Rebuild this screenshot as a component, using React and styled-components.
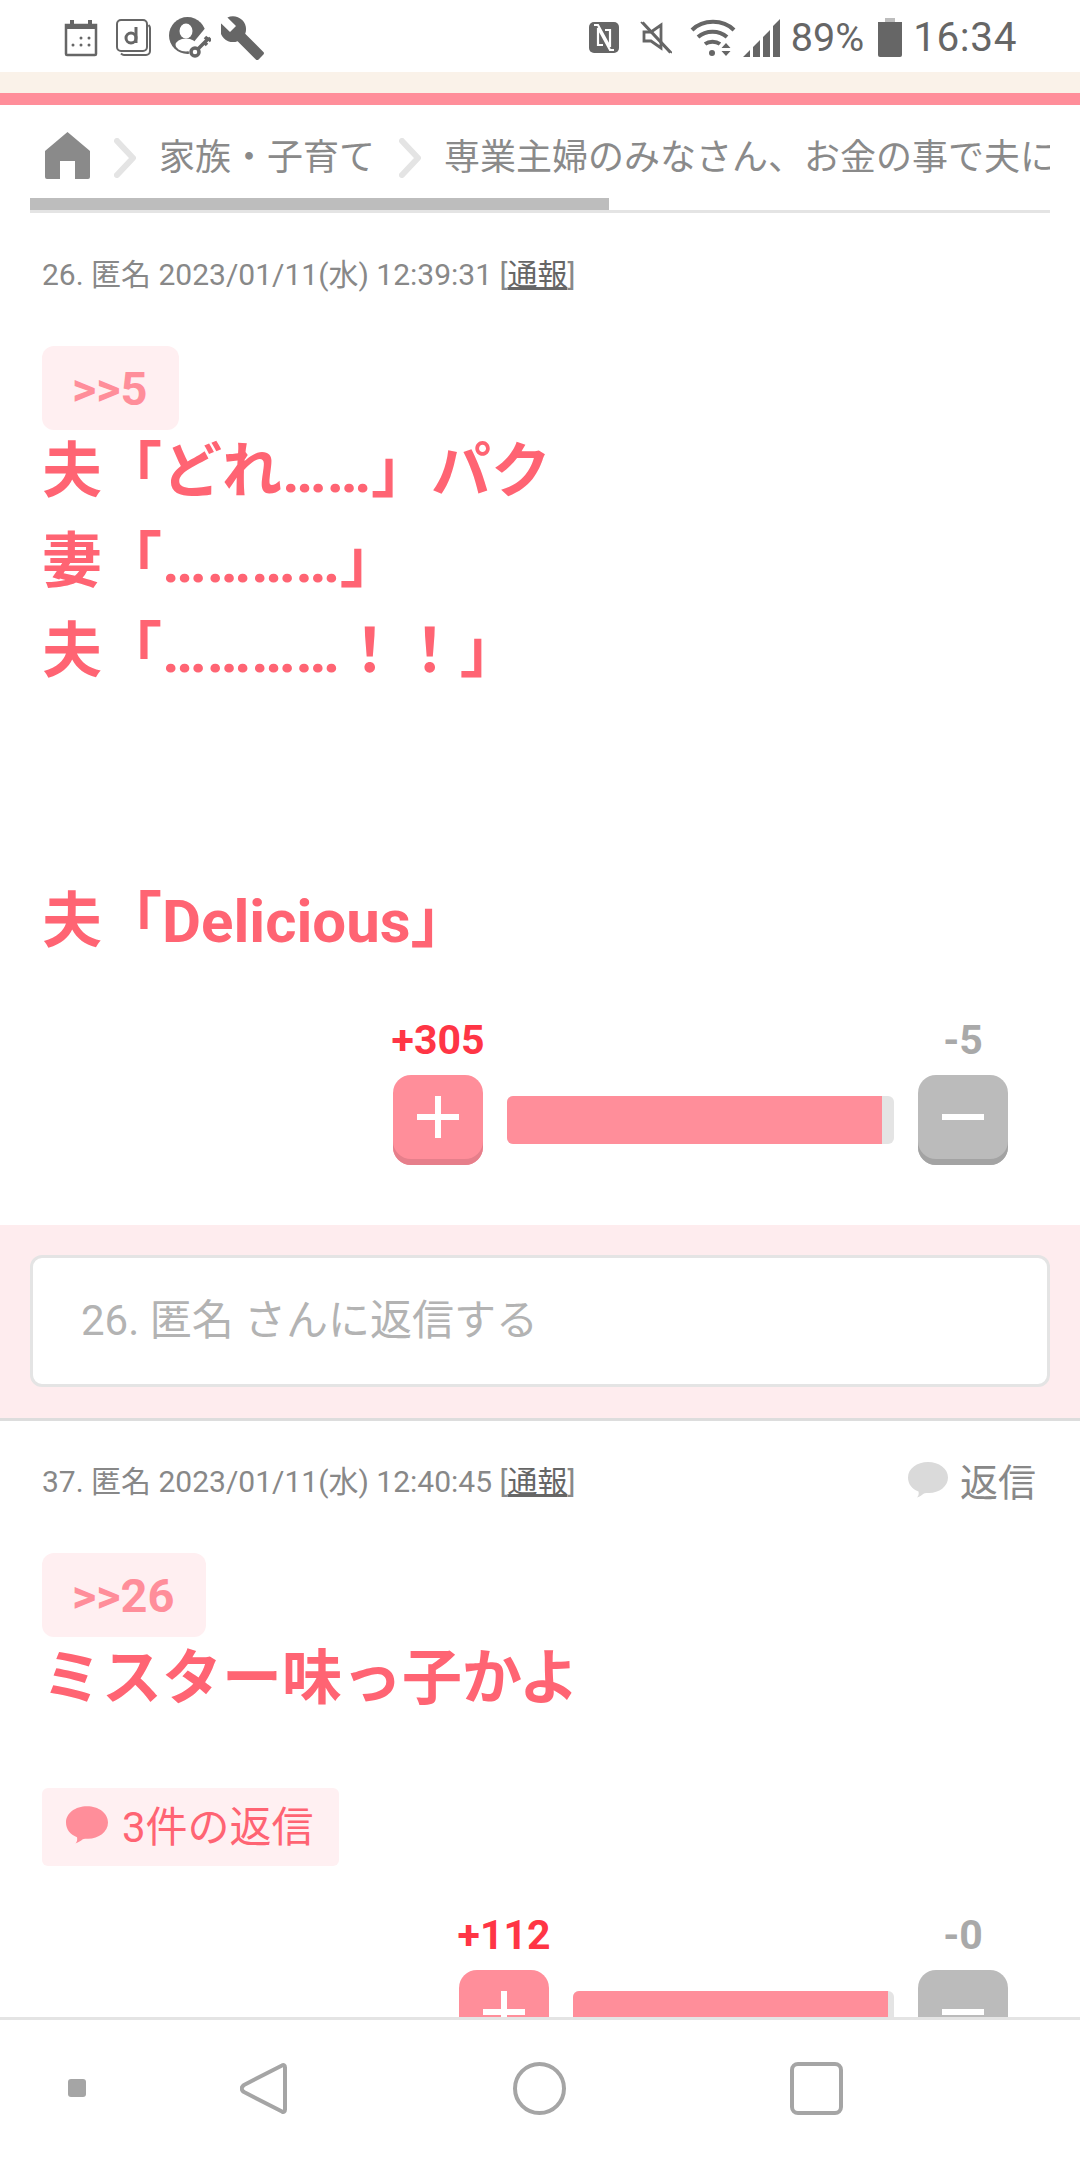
import React from 'react';
import styled, { createGlobalStyle } from 'styled-components';

const Global = createGlobalStyle`
html, body { margin: 0; padding: 0; background: #fff; }
body { font-family: Roboto, "Noto Sans CJK JP", sans-serif; }
* { box-sizing: border-box; }
`;

const Screen = styled.div`
width: 1080px;
height: 2160px;
display: flex;
flex-direction: column;
overflow: hidden;
background: #fff;
`;

// status bar
const StatusBar = styled.div`
height: 72px;
flex: none;
display: flex;
align-items: center;
justify-content: space-between;
padding: 3px 63px 0 64px;
color: #666;
`;
const StatusGroup = styled.div`
display: flex;
align-items: center;
gap: ${p => p.$gap}px;
`;
const StatusText = styled.span`
font-size: ${p => p.$size}px;
line-height: 69px;
letter-spacing: ${p => p.$spacing || 0}px;
`;
const Beige = styled.div`
height: 21px;
flex: none;
background: #faf2e9;
`;
const PinkLine = styled.div`
height: 12px;
flex: none;
background: #ff8e9a;
`;

// breadcrumb
const Crumbs = styled.div`
height: 108px;
flex: none;
margin: 0 30px;
position: relative;
border-bottom: 3px solid #e4e4e4;
`;
const CrumbRow = styled.div`
height: 97px;
display: flex;
align-items: center;
padding: 0 0 0 15px;
overflow: hidden;
`;
const HomeIcon = styled.svg`
flex: none;
width: 45px;
height: 47px;
margin-top: 4px;
`;
const CrumbText = styled.span`
flex: none;
font-size: 36px;
color: #8a8a8a;
white-space: nowrap;
`;
const Chevron = styled.svg`
flex: none;
width: 22px;
height: 40px;
margin: 8px 23px 0 24px;
`;
const Thumb = styled.div`
position: absolute;
left: 0;
bottom: 0;
width: 579px;
height: 12px;
background: #bdbdbd;
`;

const Content = styled.div`
flex: 1;
min-height: 0;
overflow: hidden;
`;

// posts
const Post = styled.div`
padding: ${p => p.$top}px 42px 0;
`;
const MetaRow = styled.div`
height: 40px;
display: flex;
align-items: center;
justify-content: space-between;
`;
const Meta = styled.div`
font-size: 30px;
color: #888;
white-space: nowrap;
`;
const Report = styled.span`
color: #666;
text-decoration: underline;
`;
const ReplyLink = styled.div`
display: flex;
align-items: center;
gap: 12px;
margin-right: 2px;
font-size: 38px;
color: #888;
`;
const Anchor = styled.div`
width: fit-content;
height: 84px;
margin: 54px 0 -3px;
padding: 0 32px 0 30px;
display: flex;
align-items: center;
border-radius: 12px;
background: #ffeff1;
color: #ff8e9a;
font-size: 47px;
font-weight: 700;
`;
const Body = styled.div`
font-size: 60px;
font-weight: 700;
line-height: 90px;
color: #ff6473;
white-space: pre-line;
`;
const RepliesTag = styled.div`
width: 297px;
height: 78px;
margin-top: 64px;
padding: 0 0 7px 24px;
display: flex;
align-items: center;
gap: 14px;
border-radius: 6px;
background: #fff0f2;
color: #ff6473;
font-size: 42px;
`;

// votes
const Votes = styled.div`
display: flex;
align-items: flex-end;
justify-content: flex-end;
gap: 24px;
margin: ${p => p.$top}px 30px 60px 0;
`;
const VoteColumn = styled.div`
width: 90px;
display: flex;
flex-direction: column;
align-items: center;
gap: 13px;
`;
const Score = styled.div`
height: 44px;
font-size: 41px;
line-height: 44px;
font-weight: 700;
white-space: nowrap;
color: ${p => p.$plus ? '#ff3545' : '#a9a9a9'};
`;
const VoteButton = styled.div`
width: 90px;
height: 90px;
display: flex;
align-items: center;
justify-content: center;
padding-bottom: 6px;
border-radius: 18px;
background: ${p => p.$plus ? '#ff8e9a' : '#bbb'};
box-shadow: inset 0 -6px 0 ${p => p.$plus ? '#e67f8b' : '#a3a3a3'};
`;
const Bar = styled.div`
width: ${p => p.$width}px;
height: 48px;
margin-bottom: 21px;
border-radius: 6px;
overflow: hidden;
background: #e4e4e4;
`;
const BarFill = styled.div`
height: 100%;
background: #ff8e9a;
`;

// reply box
const ReplyBox = styled.div`
height: 196px;
padding: 30px 30px 0;
background: #feecee;
border-bottom: 3px solid #ddd;
`;
const ReplyInput = styled.div`
height: 132px;
padding: 0 0 9px 48px;
display: flex;
align-items: center;
border: 3px solid #e4e4e4;
border-radius: 12px;
background: #fff;
color: #b3b3b3;
font-size: 42px;
`;

// navigation bar
const NavBar = styled.div`
height: 143px;
flex: none;
display: flex;
align-items: center;
padding: 0 0 4px 68px;
background: #fff;
border-top: 3px solid #e4e4e4;
`;
const NavDot = styled.div`
width: 18px;
height: 18px;
margin-right: 154px;
border-radius: 3px;
background: #a5a5a5;
`;
const NavIcon = styled.svg`
flex: none;
width: 53px;
height: 53px;
margin-right: ${p => p.$right}px;
`;

// status bar icons, each one with its own gap to the previous item
const StatusIcon = styled.svg`
flex: none;
margin-left: ${p => p.$left || 0}px;
`;
const StatusLabel = styled.span`
margin-left: ${p => p.$left}px;
`;

const Bubble = ({ size, color }) => (
  <svg width={size} height={size} viewBox="0 0 40 40" style={{ flex: 'none' }}>
    <path fill={color} d="M20 3c11 0 20 6.500 20 15.500S31 34 21 34c-2 0-4 0-5 .5-2 1.500-4 3-7 4 1.500-1.500 2-3.500 1.500-6C4 30 0 25 0 18.500 0 9.500 9 3 20 3z" />
  </svg>
);

const Plus = () => (
  <svg width="44" height="44" viewBox="0 0 44 44">
    <path fill="#fff" d="M19 1h6v18h18v6H25v18h-6V25H1v-6h18z" />
  </svg>
);
const Minus = () => (
  <svg width="44" height="44" viewBox="0 0 44 44">
    <path fill="#fff" d="M1 19h42v6H1z" />
  </svg>
);

const Vote = ({ up, down, barWidth, percent, top }) => (
  <Votes $top={top}>
    <VoteColumn>
      <Score $plus>+{up}</Score>
      <VoteButton $plus><Plus /></VoteButton>
    </VoteColumn>
    <Bar $width={barWidth}>
      <BarFill style={{ width: `${percent}%` }} />
    </Bar>
    <VoteColumn>
      <Score>-{down}</Score>
      <VoteButton><Minus /></VoteButton>
    </VoteColumn>
  </Votes>
);

const CrumbChevron = () => (
  <Chevron viewBox="0 0 22 40">
    <path d="M3 3l16 17L3 37" fill="none" stroke="#e4e4e4" strokeWidth="6" strokeLinecap="round" strokeLinejoin="round" />
  </Chevron>
);

const StatusIcons = () => (
  <StatusGroup $gap={19}>
    {/* calendar */}
    <StatusIcon width="34" height="38" viewBox="0 0 34 38">
      <path fill="none" stroke="#666" strokeWidth="2.500" d="M2 6h30v29a1 1 0 0 1-1 1H3a1 1 0 0 1-1-1z" />
      <path fill="#666" d="M1 5h32v5H1zM6 1h4v6H6zM24 1h4v6h-4z" />
      <g fill="#666">
        <circle cx="17" cy="19" r="1.500" /><circle cx="25" cy="19" r="1.500" />
        <circle cx="9" cy="26" r="1.500" /><circle cx="17" cy="26" r="1.500" /><circle cx="25" cy="26" r="1.500" />
      </g>
    </StatusIcon>
    {/* d music */}
    <StatusIcon width="35" height="37" viewBox="0 0 35 37" $left={-1}>
      <rect x="1" y="1" width="30" height="31" rx="4" fill="#fff" stroke="#666" strokeWidth="2" />
      <path d="M5 34.500c1 1 2 1.500 3 1.500h22a4 4 0 0 0 4-4V9c0-1-.5-2-1.500-3" fill="none" stroke="#666" strokeWidth="2" />
      <circle cx="15" cy="19" r="5" fill="none" stroke="#666" strokeWidth="3" />
      <path d="M20 8v16" stroke="#666" strokeWidth="3" />
    </StatusIcon>
    {/* account with key */}
    <StatusIcon width="42" height="45" viewBox="0 0 42 45" $left={-1}>
      <circle cx="18.500" cy="20.500" r="18.500" fill="#666" />
      <ellipse cx="17" cy="30" rx="10.500" ry="6.500" fill="#fff" />
      <ellipse cx="17" cy="16" rx="6.500" ry="7.500" fill="#fff" />
      <path fill="#fff" d="M38 11L19 34l3 11h20V11z" />
      <circle cx="26" cy="37" r="4" fill="none" stroke="#666" strokeWidth="3.500" />
      <path d="M29 34L40 23M35 27l3 3M39 23l3 3M36 22l2 2" stroke="#666" strokeWidth="3.500" fill="none" />
    </StatusIcon>
    {/* wrench */}
    <StatusIcon width="44" height="44" viewBox="1.500 1 22 22" $left={-9}>
      <path fill="#666" d="M22.700 19l-9.100-9.100c.9-2.300.4-5-1.500-6.900-2-2-5-2.400-7.400-1.300L9 6 6 9 1.600 4.700C.4 7.100.9 10.100 2.900 12.100c1.900 1.900 4.600 2.400 6.900 1.500l9.100 9.100c.4.400 1 .4 1.400 0l2.300-2.300c.5-.4.500-1.100.1-1.400z" />
    </StatusIcon>
  </StatusGroup>
);

const StatusRight = () => (
  <StatusGroup $gap={0}>
    {/* nfc */}
    <StatusIcon width="30" height="31" viewBox="0 0 30 31">
      <rect x="0" y="0" width="30" height="31" rx="5" fill="#666" />
      <path d="M5 3h4l12 22V8h-5M25 28h-4L9 6v17h5" fill="none" stroke="#fff" strokeWidth="2.200" />
    </StatusIcon>
    {/* muted speaker */}
    <StatusIcon width="32" height="33" viewBox="0 0 32 33" $left={21}>
      <path d="M4 11v9h7l10 7V4l-10 7z" fill="none" stroke="#666" strokeWidth="2.800" />
      <path d="M1 1l29 31M3 1l29 31" stroke="#666" strokeWidth="1.800" fill="none" />
    </StatusIcon>
    {/* wifi */}
    <StatusIcon width="46" height="38" viewBox="0 0 46 38" $left={18}>
      <path d="M2 11c11-11 31-11 42 0M8 18c8-7 21-7 29 0M15 25c4-3 11-3 15 0" fill="none" stroke="#666" strokeWidth="4" />
      <circle cx="22" cy="34" r="3" fill="#666" />
      <path fill="#666" d="M36 24l4.500 5h-9zM36 37l-4.500-5h9z" />
    </StatusIcon>
    {/* signal */}
    <StatusIcon width="37" height="38" viewBox="0 0 37 38" $left={7}>
      <path fill="#666" d="M0 38l7-7v7zM10 28l7-7v17h-7zM20 18l7-7v27h-7zM30 7l7-7v38h-7z" />
    </StatusIcon>
    <StatusLabel $left={11}><StatusText $size={39.5}>89%</StatusText></StatusLabel>
    {/* battery */}
    <StatusIcon width="24" height="39" viewBox="0 0 24 39" $left={14}>
      <rect x="7" y="0" width="10" height="5" fill="#bdbdbd" />
      <path fill="#666" d="M0 4h24v33a2 2 0 0 1-2 2H2a2 2 0 0 1-2-2z" />
    </StatusIcon>
    <StatusLabel $left={11}><StatusText $size={40.5} $spacing={0.6}>16:34</StatusText></StatusLabel>
  </StatusGroup>
);

const App = () => (
  <Screen>
    <Global />
    <StatusBar>
      <StatusIcons />
      <StatusRight />
    </StatusBar>
    <Beige />
    <PinkLine />
    <Crumbs>
      <CrumbRow>
        <HomeIcon viewBox="0 0 45 47">
          <path fill="#8a8a8a" d="M22.500 0L45 19v26a2 2 0 0 1-2 2H30V29H15v18H2a2 2 0 0 1-2-2V19z" />
        </HomeIcon>
        <CrumbChevron />
        <CrumbText>家族・子育て</CrumbText>
        <CrumbChevron />
        <CrumbText>専業主婦のみなさん、お金の事で夫に</CrumbText>
      </CrumbRow>
      <Thumb />
    </Crumbs>
    <Content>
      <Post $top={39}>
        <MetaRow>
          <Meta>26. 匿名 2023/01/11(水) 12:39:31 [<Report>通報</Report>]</Meta>
        </MetaRow>
        <Anchor>&gt;&gt;5</Anchor>
        <Body>{'夫「どれ……」パク\n妻「…………」\n夫「…………！！」\n\n\n夫「Delicious」'}</Body>
        <Vote up={305} down={5} barWidth={387} percent={96.9} top={51} />
      </Post>
      <ReplyBox>
        <ReplyInput>26. 匿名 さんに返信する</ReplyInput>
      </ReplyBox>
      <Post $top={38}>
        <MetaRow>
          <Meta>37. 匿名 2023/01/11(水) 12:40:45 [<Report>通報</Report>]</Meta>
          <ReplyLink>
            <Bubble size={40} color="#dadada" />
            返信
          </ReplyLink>
        </MetaRow>
        <Anchor>&gt;&gt;26</Anchor>
        <Body>ミスター味っ子かよ</Body>
        <RepliesTag>
          <Bubble size={42} color="#ff8e9a" />
          3件の返信
        </RepliesTag>
        <Vote up={112} down={0} barWidth={321} percent={98.1} top={47} />
      </Post>
    </Content>
    <NavBar>
      <NavDot />
      <NavIcon viewBox="0 0 53 53" $right={220}>
        <path d="M42 3.500c1.500-1 3-.5 3 2v42c0 2.500-1.500 3-3 2L4 30c-3-2-3-5 0-7z" fill="none" stroke="#a5a5a5" strokeWidth="4" strokeLinejoin="round" />
      </NavIcon>
      <NavIcon viewBox="0 0 53 53" $right={224}>
        <circle cx="26.500" cy="26.500" r="24.500" fill="none" stroke="#a5a5a5" strokeWidth="4" />
      </NavIcon>
      <NavIcon viewBox="0 0 53 53" $right={0}>
        <rect x="2" y="2" width="49" height="49" rx="6" fill="none" stroke="#a5a5a5" strokeWidth="4" />
      </NavIcon>
    </NavBar>
  </Screen>
);

export default App;
